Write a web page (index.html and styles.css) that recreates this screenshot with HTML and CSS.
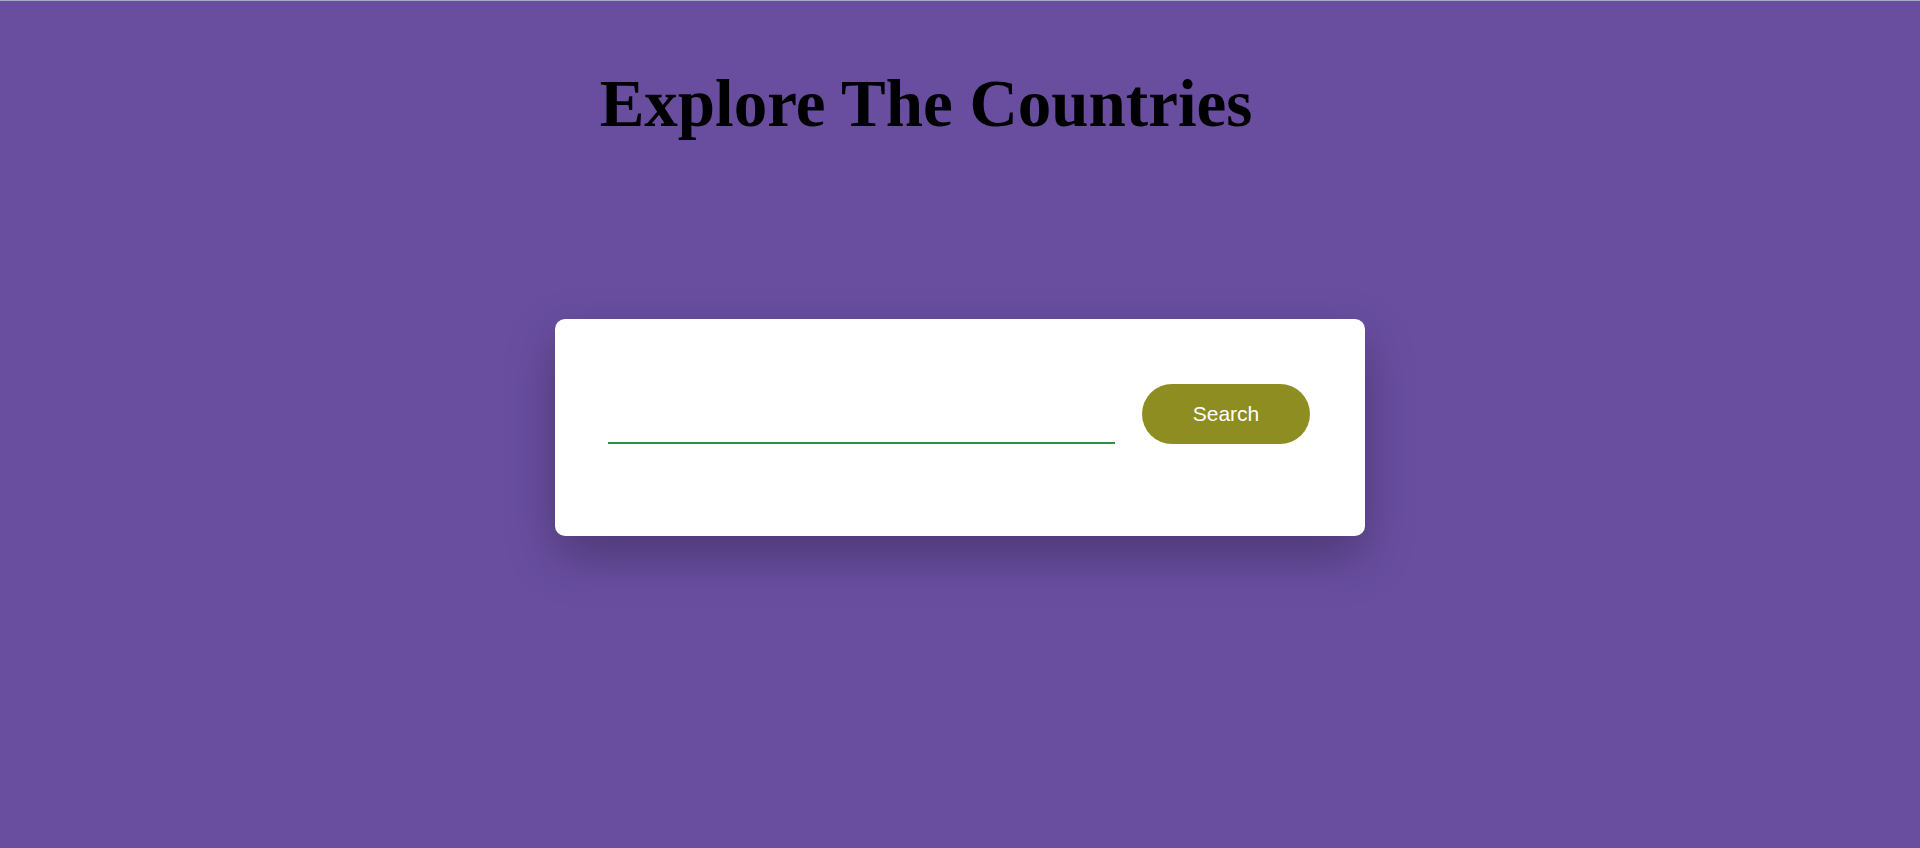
FILE: index.html
```html
<!DOCTYPE html>
<html lang="en">
<head>
<meta charset="utf-8">
<title>Explore The Countries</title>
<link rel="stylesheet" href="styles.css">
</head>
<body>
<main class="page">
  <h1 class="title">Explore The Countries</h1>
  <form class="search-card" onsubmit="return false;">
    <input class="search-input" type="text" aria-label="Country name">
    <button class="search-btn" type="submit">Search</button>
  </form>
</main>
</body>
</html>
```

FILE: styles.css
```css
html, body {
  margin: 0;
  padding: 0;
  height: 100%;
}

body {
  background: #694ea0;
  border-top: 1px solid #a3abbf;
  box-sizing: border-box;
  font-family: "Liberation Serif", "Times New Roman", serif;
}

.page {
  display: flex;
  flex-direction: column;
  align-items: center;
  padding-top: 64px;
}

.title {
  margin: 0 68px 0 0;
  font-family: "Liberation Serif", "Times New Roman", serif;
  font-weight: bold;
  font-size: 67px;
  line-height: 77px;
  color: #000;
}

.search-card {
  margin-top: 177px;
  width: 810px;
  box-sizing: border-box;
  padding: 65px 55px 92px 53px;
  background: #fff;
  border-radius: 10px;
  box-shadow: 0 20px 50px rgba(0, 0, 0, 0.28);
  display: flex;
  align-items: flex-end;
  gap: 27px;
}

.search-input {
  width: 507px;
  height: 40px;
  box-sizing: border-box;
  border: none;
  border-bottom: 2px solid #2f913e;
  outline: none;
  background: transparent;
  font-family: "Liberation Sans", Arial, sans-serif;
  font-size: 18px;
  padding: 0;
}

.search-btn {
  width: 168px;
  height: 60px;
  border: none;
  border-radius: 30px;
  background: #8d8d22;
  color: #fff;
  font-family: "Liberation Sans", Arial, sans-serif;
  font-size: 21px;
  cursor: pointer;
  padding: 0;
}
```
